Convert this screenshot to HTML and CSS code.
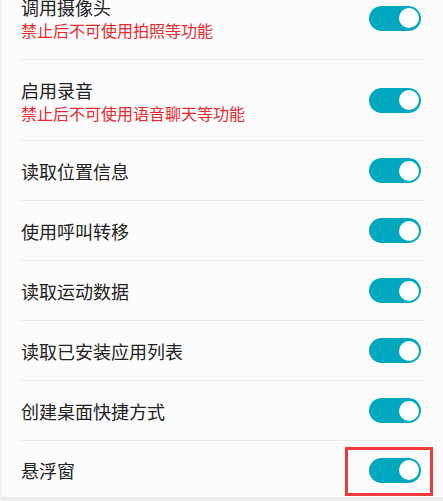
FILE: index.html
```html
<!DOCTYPE html>
<html lang="zh-CN">
<head>
<meta charset="utf-8">
<link rel="stylesheet" href="styles.css">
</head>
<body>
<div class="page">
  <ul class="list">
    <li class="row row-double row-first">
      <div class="text">
        <div class="title">调用摄像头</div>
        <div class="sub">禁止后不可使用拍照等功能</div>
      </div>
      <span class="toggle"><span class="knob"></span></span>
    </li>
    <li class="row row-double">
      <div class="text">
        <div class="title">启用录音</div>
        <div class="sub">禁止后不可使用语音聊天等功能</div>
      </div>
      <span class="toggle"><span class="knob"></span></span>
    </li>
    <li class="row"><div class="title">读取位置信息</div><span class="toggle"><span class="knob"></span></span></li>
    <li class="row"><div class="title">使用呼叫转移</div><span class="toggle"><span class="knob"></span></span></li>
    <li class="row"><div class="title">读取运动数据</div><span class="toggle"><span class="knob"></span></span></li>
    <li class="row"><div class="title">读取已安装应用列表</div><span class="toggle"><span class="knob"></span></span></li>
    <li class="row"><div class="title">创建桌面快捷方式</div><span class="toggle"><span class="knob"></span></span></li>
    <li class="row row-last"><div class="title">悬浮窗</div><span class="toggle"><span class="knob"></span></span></li>
  </ul>
  <div class="highlight"></div>
  <div class="footer"></div>
</div>
</body>
</html>
```
FILE: styles.css
```css
html, body {
  margin: 0;
  padding: 0;
  background: #fcfcfc;
  overflow: hidden;
}
body {
  width: 443px;
  height: 501px;
  font-family: "Noto Sans CJK SC", "Noto Sans", sans-serif;
}
.page {
  position: relative;
  width: 443px;
  height: 501px;
  box-sizing: border-box;
  border-left: 2px solid #edf2f7;
  background: #fcfcfc;
  overflow: hidden;
  display: flex;
  flex-direction: column;
}
.list {
  list-style: none;
  margin: -23px 0 0 0;
  padding: 0;
}
.row {
  display: flex;
  align-items: center;
  justify-content: space-between;
  margin: 0 19px 0 19px;
  height: 59px;
  border-bottom: 1px solid #ebebeb;
}
.row-double {
  height: 80px;
  align-items: stretch;
}
.row-first {
  height: 82px;
}
.row-double .text {
  padding-top: 19px;
}
.row-double .toggle {
  align-self: center;
}
.row-last {
  height: 56px;
  border-bottom: none;
  padding-top: 1px;
}
.title {
  font-size: 18px;
  line-height: 22px;
  color: #222;
}
.sub {
  margin-top: 2px;
  font-size: 16px;
  line-height: 20px;
  color: #e8292e;
}
.toggle {
  display: flex;
  align-items: center;
  justify-content: flex-end;
  box-sizing: border-box;
  width: 52px;
  height: 25px;
  margin-right: 3px;
  padding-right: 2px;
  border-radius: 13px;
  background: #00a8bf;
  flex-shrink: 0;
}
.knob {
  width: 20px;
  height: 20px;
  border-radius: 50%;
  background: #fff;
}
.highlight {
  position: absolute;
  left: 343px;
  top: 447px;
  width: 88px;
  height: 49px;
  box-sizing: border-box;
  border: 3px solid #f0393b;
}
.footer {
  position: absolute;
  left: -2px;
  right: 0;
  bottom: 0;
  height: 4px;
  background: #ececec;
}
```
